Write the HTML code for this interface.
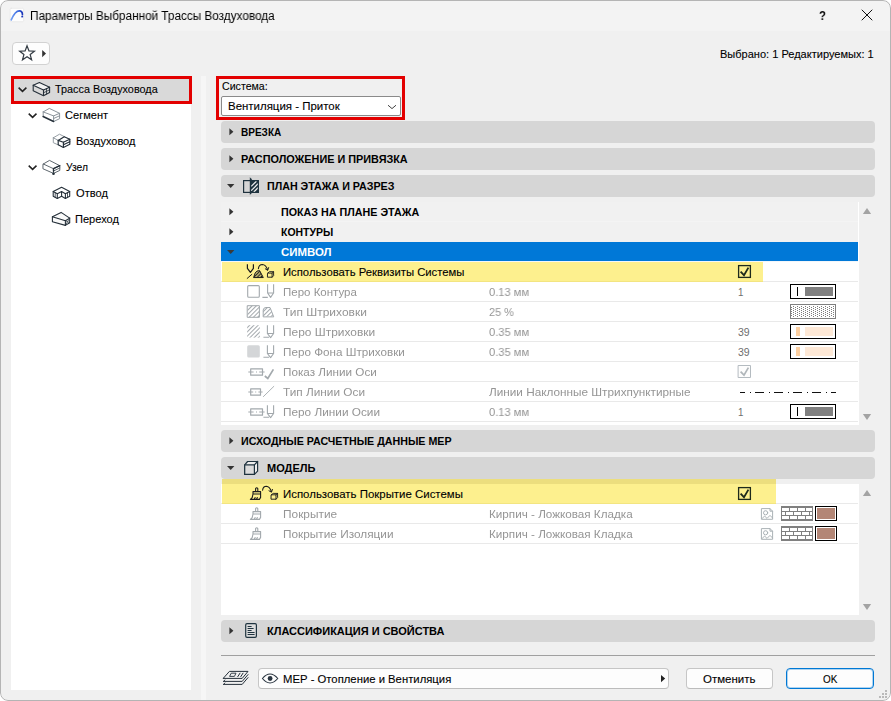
<!DOCTYPE html>
<html lang="ru">
<head>
<meta charset="utf-8">
<title>Параметры Выбранной Трассы Воздуховода</title>
<style>
html,body{margin:0;padding:0;}
body{width:891px;height:701px;overflow:hidden;background:#fff;font-family:"Liberation Sans",sans-serif;font-size:12px;position:relative;}
#win{position:absolute;left:0;top:0;width:891px;height:701px;border-radius:8px;background:#f0f0f0;overflow:hidden;}
#frame{position:absolute;left:0;top:0;width:889px;height:699px;border:1px solid #b4b4b4;border-radius:8px;pointer-events:none;}
#titlebar{position:absolute;left:0;top:0;width:891px;height:31px;background:#f3f3f3;}
.abs{position:absolute;}
.t{position:absolute;white-space:nowrap;line-height:14px;font-size:12px;transform-origin:0 0;display:block;}
.hdr{position:absolute;left:221px;width:654px;height:22px;background:#d6d6d6;border-radius:4px;}
.row{position:absolute;left:221px;width:637px;height:19px;border-bottom:1px solid #e9e9e9;background:#fff;}
.tri-r{position:absolute;width:0;height:0;border-style:solid;border-width:3.5px 0 3.5px 4px;border-color:transparent transparent transparent #333;}
.tri-d{position:absolute;width:0;height:0;border-style:solid;border-width:4px 3.5px 0 3.5px;border-color:#333 transparent transparent transparent;}
svg{position:absolute;overflow:visible;}
</style>
</head>
<body>
<div id="win">
<div id="titlebar"></div>

<!-- favourites button -->
<div class="abs" style="left:12px;top:42px;width:36px;height:21px;border:1px solid #d2d2d2;border-radius:4px;background:#fdfdfd;"></div>

<!-- tree panel -->
<div class="abs" style="left:11px;top:76px;width:180px;height:614px;background:#fff;"></div>
<div class="abs" style="left:11px;top:76px;width:175px;height:22px;border:3px solid #e30000;background:#d9d9d9;"></div>
<!-- splitter -->
<div class="abs" style="left:201px;top:76px;width:5px;height:625px;background:#f6f6f6;"></div>

<!-- system red box + dropdown -->
<div class="abs" style="left:216px;top:76px;width:183px;height:38px;border:3px solid #e30000;"></div>
<div class="abs" style="left:221px;top:96px;width:178px;height:18px;border:1px solid #8a8a8a;border-radius:2px;background:#fff;"></div>

<!-- header bars -->
<div class="hdr" style="top:121px;"></div>
<div class="hdr" style="top:148px;"></div>
<div class="hdr" style="top:175px;"></div>
<div class="hdr" style="top:430px;"></div>
<div class="hdr" style="top:457px;"></div>
<div class="hdr" style="top:620px;"></div>

<!-- list 1 -->
<div class="abs" style="left:221px;top:202px;width:637px;height:223px;background:#fff;"></div>
<div class="abs" style="left:858px;top:202px;width:1px;height:223px;background:#fff;"></div>
<div class="row" style="top:202px;background:#f1f1f1;border-bottom-color:#f4f4f4;"></div>
<div class="row" style="top:222px;background:#f1f1f1;border-bottom-color:#f1f1f1;"></div>
<div class="row" style="top:242px;background:#0078d7;border-bottom-color:#f3f7fb;"></div>
<div class="row" style="top:262px;"></div>
<div class="abs" style="left:222px;top:262px;width:541px;height:20px;background:#fdf08e;border-bottom:1px solid #f3e581;box-sizing:border-box;"></div>
<div class="row" style="top:282px;"></div>
<div class="row" style="top:302px;"></div>
<div class="row" style="top:322px;"></div>
<div class="row" style="top:342px;"></div>
<div class="row" style="top:362px;"></div>
<div class="row" style="top:382px;"></div>
<div class="row" style="top:402px;"></div>

<!-- list 2 -->
<div class="abs" style="left:221px;top:484px;width:638px;height:131px;background:#fff;"></div>
<div class="abs" style="left:222px;top:479px;width:554px;height:5px;background:#ecde7e;"></div>
<div class="row" style="top:484px;"></div>
<div class="abs" style="left:222px;top:484px;width:554px;height:20px;background:#fdf08e;border-bottom:1px solid #f3e581;box-sizing:border-box;"></div>
<div class="row" style="top:504px;"></div>
<div class="row" style="top:524px;"></div>

<!-- bottom separator -->
<div class="abs" style="left:221px;top:655px;width:654px;height:1px;background:#a0a0a0;"></div>
<!-- layer dropdown -->
<div class="abs" style="left:258px;top:668px;width:409px;height:19px;border:1px solid #c6c6c6;border-bottom-color:#bcbcbc;border-radius:4px;background:#fdfdfd;"></div>
<!-- buttons -->
<div class="abs" style="left:686px;top:668px;width:85px;height:19px;border:1px solid #c6c6c6;border-bottom-color:#bcbcbc;border-radius:4px;background:#fdfdfd;"></div>
<div class="abs" style="left:786px;top:668px;width:86px;height:19px;border:1px solid #0078d4;box-shadow:inset 0 0 0 1px rgba(0,120,212,.3);border-radius:4px;background:#fdfdfd;"></div>

<svg width="891" height="701" viewBox="0 0 891 701" style="left:0;top:0" fill="none" stroke-linecap="round" stroke-linejoin="round">
<defs>
<pattern id="dots" width="4" height="2" patternUnits="userSpaceOnUse"><rect width="4" height="2" fill="#fff"/><rect x="1" y="0" width="1" height="1" fill="#7c7c7c"/><rect x="3" y="1" width="1" height="1" fill="#7c7c7c"/></pattern>
<pattern id="hat" width="3" height="3" patternUnits="userSpaceOnUse" patternTransform="rotate(-45)"><rect width="3" height="1" y="1" fill="#a2a8ac"/></pattern>
<pattern id="hatd" width="2.4" height="2.4" patternUnits="userSpaceOnUse" patternTransform="rotate(-45)"><rect width="2.4" height="1.3" y="0.5" fill="#1c1c1c"/></pattern>
<linearGradient id="ac" x1="0" y1="0" x2="1" y2="0"><stop offset="0" stop-color="#6f9cf3"/><stop offset="0.6" stop-color="#3b6be0"/><stop offset="1" stop-color="#1b36b8"/></linearGradient>
</defs>

<!-- app icon -->
<rect x="10.2" y="8.3" width="13.4" height="13.4" rx="1" fill="#fdfdfd" stroke="#e2e2e2" stroke-width="0.6"/>
<path d="M11.2 19.8 C13.5 14.5 16 10.8 19.3 10.8 C21.6 10.8 22.4 12.6 22.4 14.6" stroke="url(#ac)" stroke-width="1.7"/>
<rect x="21.3" y="15.8" width="1.8" height="1.6" fill="#1b36b8"/>

<!-- title buttons -->
<path d="M862 10 L872 20 M872 10 L862 20" stroke="#111" stroke-width="1"/>
<!-- star -->
<path d="M27.05 45.85 L28.99 50.88 L34.37 51.17 L30.19 54.57 L31.58 59.78 L27.05 56.85 L22.52 59.78 L23.91 54.57 L19.73 51.17 L25.11 50.88 Z" stroke="#343c44" stroke-width="1.25" stroke-linejoin="miter"/>
<path d="M42.2 50 L46 53.6 L42.2 57.2 Z" fill="#333" stroke="none"/>

<!-- tree chevrons -->
<g stroke="#222" stroke-width="1.5" stroke-linecap="butt" stroke-linejoin="miter">
<path d="M18.6 87.6 L22.5 91.4 L26.4 87.6"/>
<path d="M28.7 113.6 L32.6 117.4 L36.5 113.6"/>
<path d="M28.7 165.6 L32.6 169.4 L36.5 165.6"/>
</g>

<!-- tree icon 1: duct run -->
<g stroke="#25303a" stroke-width="1.1">
<path d="M33.2 85.2 L39.4 82.6 L49.6 87.2 L43.5 90 Z" fill="#f2f2f2"/>
<path d="M33.2 85.1 L33.2 90.8 L43.5 95.7 L49.6 92.6 L49.6 87.1 M43.5 90 L43.5 95.7"/>
<path d="M43.5 92.8 L49.6 89.8 M46.5 88.6 L46.5 94.1" stroke-width="0.8"/>
</g>
<!-- tree icon 2: segment -->
<g stroke="#8b949b" stroke-width="1">
<path d="M43.2 111.9 L49.3 108.4 L59.6 113.3 L59.6 118.7 L53.6 121.5 M43.2 111.9 L43.2 116.3 M43.2 111.9 L53.6 115.9 L59.6 113.3 M53.6 115.9 L53.6 121.5 M53.6 118.5 L59.6 115.8"/>
</g>
<path d="M43.1 116.5 L53.6 121.5" stroke="#25303a" stroke-width="1.5"/>
<!-- tree icon 3: duct -->
<g stroke="#8b949b" stroke-width="0.9">
<path d="M53.3 137.8 L59.5 134.2 L64.2 136.6 M53.3 137.8 L53.3 142.7 L58.2 144.9 M53.3 137.8 L58.2 140.3"/>
</g>
<g stroke="#25303a" stroke-width="1.2">
<path d="M58.2 140.4 L64.2 136.7 L69.8 139.2 L69.8 144.3 L63.4 147.5 L58.2 144.7 Z"/>
<path d="M58.2 140.4 L63.4 142.2 L69.8 139.2 M63.4 142.2 L63.4 147.5 M63.4 144.8 L69.8 141.8" />
</g>
<!-- tree icon 4: node -->
<g stroke="#4c565e" stroke-width="0.9">
<path d="M43.3 164 L49.5 160.4 L59.8 165.7 L59.8 170.4 L53.5 173.4 L43.3 168.9 Z"/>
<path d="M43.3 164 L53.5 168.7 L59.8 165.7 M53.5 168.7 L53.5 173.4 M53.5 171 L59.8 168"/>
</g>
<path d="M53.5 171.2 L53.5 168.7 L59.8 165.7" stroke="#25303a" stroke-width="1.4"/>
<circle cx="53.5" cy="173.8" r="1.3" fill="#25303a"/>
<!-- tree icon 5: bend -->
<g stroke="#25303a" stroke-width="1.1">
<path d="M61.6 187.3 L69.7 191.6 L69.7 196.3 L65.4 198.4 L61.6 196.3 L57.3 198.4 L53.2 196.3 L53.2 191.6 Z"/>
<path d="M53.2 191.6 L57.3 193.7 L61.6 191.6 L65.4 193.7 L69.7 191.6 M57.3 193.7 L57.3 198.4 M65.4 193.7 L65.4 198.4 M61.6 191.6 L61.6 196.3"/>
<path d="M55.2 192.8 L55.2 197.2 M67.5 192.8 L67.5 197.2" stroke-width="0.8"/>
</g>
<!-- tree icon 6: transition -->
<g stroke="#25303a" stroke-width="1.1">
<path d="M61.1 212.4 L69.7 218.1 L69.7 222.8 L65.4 225.4 L52.4 221.8 L52.4 216.8 Z" fill="#fafafa"/>
<path d="M52.4 216.8 L65.4 220.7 L69.7 218.1 M65.4 220.7 L65.4 225.4"/>
<path d="M65.4 220.7 L69.7 222.8 M65.4 225.4 L69.7 218.1" stroke-width="0.7"/>
</g>

<!-- dropdown chevron -->
<path d="M388 105.2 L392 108.6 L396 105.2" stroke="#444" stroke-width="1" stroke-linecap="butt"/>

<!-- header triangles -->
<g fill="#333" stroke="none">
<path d="M229.4 128.2 L233.4 131.7 L229.4 135.2 Z"/>
<path d="M229.4 155.2 L233.4 158.7 L229.4 162.2 Z"/>
<path d="M227 184 L234.4 184 L230.7 188 Z"/>
<path d="M229.4 208.2 L233.4 211.7 L229.4 215.2 Z"/>
<path d="M229.4 228.2 L233.4 231.7 L229.4 235.2 Z"/>
<path d="M227 250 L234.4 250 L230.7 254 Z" fill="#3a3a3a"/>
<path d="M229.4 437.2 L233.4 440.7 L229.4 444.2 Z"/>
<path d="M227 466 L234.4 466 L230.7 470 Z"/>
<path d="M229.4 627.2 L233.4 630.7 L229.4 634.2 Z"/>
</g>

<!-- plan icon -->
<g stroke="#1f333f" stroke-width="1.2" stroke-linejoin="miter">
<rect x="250.4" y="180.4" width="8" height="12" fill="#1f333f" stroke="none"/>
<path d="M251.2 186.4 L256.4 181.2 M251.2 190.6 L258 183.8 M253.8 192 L258 187.8" stroke="#f0f0f0" stroke-width="1.25" stroke-linecap="butt"/>
<rect x="243.6" y="180.6" width="14.8" height="11.8"/>
<path d="M250.4 178.2 L250.4 194" stroke-linecap="butt"/>
<path d="M250.4 178 L251.6 179.6 M250.4 194.2 L251.6 192.6" stroke-width="0.9"/>
<path d="M250.6 185 L250.6 187.5 L251.8 188.5" stroke-width="0.9"/>
</g>
<!-- cube icon -->
<g stroke="#1f333f" stroke-width="1.2" stroke-linejoin="round">
<path d="M244.7 464.8 L247.6 461.5 L257.6 461.5 L257.6 471.2 L254.4 474.4 L244.7 474.4 Z" fill="#ececec"/>
<rect x="244.7" y="464.8" width="9.7" height="9.6" fill="#dcdcdc"/>
<path d="M254.4 464.8 L257.6 461.5"/>
</g>
<!-- classification icon -->
<g stroke="#1f333f">
<rect x="245.7" y="623.7" width="10.7" height="13.7" rx="1.3" stroke-width="1.2" fill="#dcdcdc"/>
<path d="M247.6 626.5 L251.6 626.5 M247.6 628.5 L253.6 628.5 M247.6 630.5 L251.6 630.5 M247.6 632.5 L254.6 632.5 M247.6 634.5 L254.6 634.5" stroke-width="1" stroke-linecap="butt"/>
</g>

<!-- row icon: use system attributes (dark) -->
<g stroke="#1c1c1c" stroke-width="1.1">
<path d="M247.4 264.3 L247.4 268.3 L250.4 272.3 L253.4 268.3 L253.4 264.3" stroke-linecap="butt" stroke-width="1.2"/>
<path d="M247.2 278.4 L251.8 274.4" stroke-width="1"/>
<path d="M253.7 277.2 L255.2 273 Q256.6 270.4 259.6 270.6 L263.1 277.2 Z" fill="url(#hatd)" stroke-width="1"/>
<path d="M258.4 268.6 Q258.8 264.6 262.4 264.5 Q265.8 264.6 267.6 269.8"/>
<path d="M265.3 268.8 L267.7 270.4 L268.6 267.6" stroke-width="1"/>
<path d="M267.8 273.1 L269.4 271.7 L273.6 271.7 L273.6 275.7 L272.1 277.2 L267.8 277.2 Z M267.8 273.1 L272.1 273.1 L272.1 277.2 M272.1 273.1 L273.6 271.7" stroke-width="0.95"/>
</g>

<!-- row icons gray -->
<g stroke="#a3a9ad" stroke-width="1.1">
<!-- pero kontura -->
<rect x="247.7" y="285.6" width="11.6" height="11.6" rx="1"/>
<path d="M262.4 297.4 L267.8 297.4 M267.6 284.3 L267.6 293 L270.6 297.4 L273.6 293 L273.6 284.3 M267.6 293 L273.6 293" stroke-linecap="butt"/>
<!-- tip shtrihovki -->
<rect x="247.6" y="305.7" width="11.8" height="11.6" fill="url(#hat)" stroke-width="1"/>
<path d="M263.2 316.5 L263.2 310 Q263.4 307.6 266 307.5 L270 307.5 L273.6 316.5 Z" fill="url(#hat)" stroke-width="1"/>
<!-- pero shtrihovki -->
<rect x="247.2" y="325.2" width="12.6" height="12.4" fill="url(#hat)" stroke="none"/>
<path d="M263.4 337.3 L269 337.3 M267.4 325.2 L267.4 333.5 L270.6 337.6 L273.6 333.5 L273.6 325.2 M267.4 333.5 L273.6 333.5" stroke-linecap="butt"/>
<!-- pero fona -->
<rect x="247.2" y="345.2" width="12.6" height="12.4" rx="1.5" fill="#d4d6d8" stroke="none"/>
<path d="M263.4 357.3 L269 357.3 M267.4 345.2 L267.4 353.5 L270.6 357.6 L273.6 353.5 L273.6 345.2 M267.4 353.5 L273.6 353.5" stroke-linecap="butt"/>
<!-- pokaz linii osi -->
<rect x="250.7" y="368.8" width="11.8" height="6.4" stroke-width="1.2"/>
<path d="M248.3 372 L253.6 372 M256 372 L257 372 M259.2 372 L264.6 372" stroke-width="1.2" stroke-linecap="butt"/>
<path d="M264.8 376 L267.8 378.4 L273.4 369.4" stroke-width="1.7" stroke-linecap="butt" stroke-linejoin="miter"/>
<!-- tip linii osi -->
<rect x="250.7" y="388.8" width="9.8" height="6.4" stroke-width="1.2"/>
<path d="M248.3 392 L253.2 392 M255.2 392 L256.2 392 M258.4 392 L262.6 392" stroke-width="1.2" stroke-linecap="butt"/>
<path d="M263.4 396.6 L273.8 386.4" stroke-width="0.9"/>
<!-- pero linii osi -->
<rect x="250.7" y="408.8" width="11.8" height="6.4" stroke-width="1.2"/>
<path d="M248.3 412 L253.6 412 M256 412 L257 412 M259.2 412 L264.6 412" stroke-width="1.2" stroke-linecap="butt"/>
<path d="M263.4 417.3 L269 417.3 M267.4 405.2 L267.4 413.5 L270.6 417.6 L273.6 413.5 L273.6 405.2 M267.4 413.5 L273.6 413.5" stroke-linecap="butt"/>
</g>

<!-- brush icons -->
<g stroke="#1c1c1c" stroke-width="1.1">
<path d="M255.6 491.4 L255.6 488.6 Q256.7 487 257.8 488.6 L257.8 491.4 M253 491.6 L260.6 491.6 L260.6 494 L253 494 Z M253 494 L252.2 497.6 L250.4 499.4 L259.4 499.4 L260.6 497.4 L260.6 494 M254.6 498.4 L255.2 497.6 M256.8 498.4 L257.4 497.6"/>
<path d="M262.6 490.2 Q263 486.2 266.4 486.2 Q269.6 486.4 271.4 491.6"/>
<path d="M269 490.8 L271.5 492.2 L272.4 489.4" stroke-width="1"/>
<path d="M271.4 494.8 L273.2 493.4 L277.6 493.4 L277.6 497.6 L276 499.2 L271.4 499.2 Z M271.4 494.8 L276 494.8 L276 499.2 M276 494.8 L277.6 493.4" stroke-width="0.95"/>
</g>
<g stroke="#a3a9ad" stroke-width="1.1">
<path d="M255.6 511.4 L255.6 508.6 Q256.7 507 257.8 508.6 L257.8 511.4 M253 511.6 L260.6 511.6 L260.6 514 L253 514 Z M253 514 L252.2 517.6 L250.4 519.4 L259.4 519.4 L260.6 517.4 L260.6 514 M254.6 518.4 L255.2 517.6 M256.8 518.4 L257.4 517.6"/>
<path d="M255.6 531.4 L255.6 528.6 Q256.7 527 257.8 528.6 L257.8 531.4 M253 531.6 L260.6 531.6 L260.6 534 L253 534 Z M253 534 L252.2 537.6 L250.4 539.4 L259.4 539.4 L260.6 537.4 L260.6 534 M254.6 538.4 L255.2 537.6 M256.8 538.4 L257.4 537.6"/>
</g>

<!-- checkboxes -->
<g stroke="#1e2a1c">
<rect x="738.6" y="265.6" width="11.8" height="11.8" stroke-width="1.3" stroke-linejoin="miter"/>
<path d="M740.6 271.6 L744 275.2 L748.4 267.6" stroke-width="1.8" stroke-linecap="butt" stroke-linejoin="miter"/>
<rect x="738.6" y="487.6" width="11.8" height="11.8" stroke-width="1.3" stroke-linejoin="miter"/>
<path d="M740.6 493.6 L744 497.2 L748.4 489.6" stroke-width="1.8" stroke-linecap="butt" stroke-linejoin="miter"/>
</g>
<rect x="738.5" y="365.5" width="12" height="12" stroke="#b4bbc0" stroke-width="1" fill="#fdfdfd"/>
<path d="M740.6 371.6 L744 375.2 L748.4 367.6" stroke="#b0b6ba" stroke-width="1.7" stroke-linecap="butt" stroke-linejoin="miter"/>

<!-- pen swatches -->
<g shape-rendering="crispEdges" stroke="none">
<rect x="790" y="284" width="46" height="15" fill="#000"/><rect x="791" y="285" width="44" height="13" fill="#fff"/>
<rect x="797" y="287" width="1" height="9" fill="#000"/><rect x="805" y="287" width="28" height="9" fill="#808080"/>
<rect x="790" y="304" width="46" height="15" fill="#7f7f7f"/><rect x="791" y="305" width="44" height="13" fill="#fff"/><rect x="791" y="306" width="44" height="11" fill="url(#dots)"/>
<rect x="790" y="324" width="46" height="15" fill="#000"/><rect x="791" y="325" width="44" height="13" fill="#fff"/>
<rect x="796" y="327" width="4" height="9" fill="#fdd0a2"/><rect x="805" y="327" width="28" height="9" fill="#fee9d7"/>
<rect x="790" y="344" width="46" height="15" fill="#000"/><rect x="791" y="345" width="44" height="13" fill="#fff"/>
<rect x="796" y="347" width="4" height="9" fill="#fdd0a2"/><rect x="805" y="347" width="28" height="9" fill="#fee9d7"/>
<rect x="790" y="404" width="46" height="15" fill="#000"/><rect x="791" y="405" width="44" height="13" fill="#fff"/>
<rect x="797" y="407" width="1" height="9" fill="#000"/><rect x="805" y="407" width="28" height="9" fill="#808080"/>
<!-- dash-dot line -->
<g fill="#111">
<rect x="740" y="392" width="5" height="1"/><rect x="750" y="392" width="1" height="1"/>
<rect x="755" y="392" width="9" height="1"/><rect x="769" y="392" width="1" height="1"/>
<rect x="774" y="392" width="9" height="1"/><rect x="788" y="392" width="1" height="1"/>
<rect x="793" y="392" width="9" height="1"/><rect x="807" y="392" width="1" height="1"/>
<rect x="812" y="392" width="9" height="1"/><rect x="826" y="392" width="1" height="1"/>
<rect x="831" y="392" width="5" height="1"/>
</g>
</g>

<!-- scroll arrows -->
<g fill="#a3a3a3" stroke="none">
<path d="M862.9 213.9 L871.1 213.9 L867 208 Z"/>
<path d="M862.9 414.1 L871.1 414.1 L867 420 Z"/>
<path d="M862.9 495.9 L871.1 495.9 L867 490 Z"/>
<path d="M862.9 604.1 L871.1 604.1 L867 610 Z"/>
</g>

<!-- image icons + brick + colour swatches -->
<g>
<path d="M761.8 508.6 L770 508.6 L772.6 511.2 L772.6 519.3 L761.8 519.3 Z M770 508.6 L770 511.2 L772.6 511.2" stroke="#aab2b6" stroke-width="1"/>
<circle cx="765.6" cy="512.8" r="2.1" stroke="#aab2b6" stroke-width="1"/>
<path d="M762 518.6 L764.6 516 L767 518.4 L770 515.4 L772.4 517.8" stroke="#aab2b6" stroke-width="1"/>
<g shape-rendering="crispEdges" stroke="none">
<rect x="781" y="506" width="32" height="15" fill="#808080"/>
<g fill="#fff">
<rect x="782" y="508" width="7" height="3"/><rect x="790" y="508" width="7" height="3"/><rect x="798" y="508" width="7" height="3"/><rect x="806" y="508" width="6" height="3"/>
<rect x="782" y="512" width="3" height="3"/><rect x="786" y="512" width="7" height="3"/><rect x="794" y="512" width="7" height="3"/><rect x="802" y="512" width="7" height="3"/><rect x="810" y="512" width="2" height="3"/>
<rect x="782" y="516" width="7" height="3"/><rect x="790" y="516" width="7" height="3"/><rect x="798" y="516" width="7" height="3"/><rect x="806" y="516" width="6" height="3"/>
</g>
<rect x="815" y="506" width="22" height="15" fill="#000"/><rect x="816" y="507" width="20" height="13" fill="#fff"/><rect x="817" y="508" width="18" height="11" fill="#b38676"/>
</g>
</g>
<g transform="translate(0,20)">
<path d="M761.8 508.6 L770 508.6 L772.6 511.2 L772.6 519.3 L761.8 519.3 Z M770 508.6 L770 511.2 L772.6 511.2" stroke="#aab2b6" stroke-width="1"/>
<circle cx="765.6" cy="512.8" r="2.1" stroke="#aab2b6" stroke-width="1"/>
<path d="M762 518.6 L764.6 516 L767 518.4 L770 515.4 L772.4 517.8" stroke="#aab2b6" stroke-width="1"/>
<g shape-rendering="crispEdges" stroke="none">
<rect x="781" y="506" width="32" height="15" fill="#808080"/>
<g fill="#fff">
<rect x="782" y="508" width="7" height="3"/><rect x="790" y="508" width="7" height="3"/><rect x="798" y="508" width="7" height="3"/><rect x="806" y="508" width="6" height="3"/>
<rect x="782" y="512" width="3" height="3"/><rect x="786" y="512" width="7" height="3"/><rect x="794" y="512" width="7" height="3"/><rect x="802" y="512" width="7" height="3"/><rect x="810" y="512" width="2" height="3"/>
<rect x="782" y="516" width="7" height="3"/><rect x="790" y="516" width="7" height="3"/><rect x="798" y="516" width="7" height="3"/><rect x="806" y="516" width="6" height="3"/>
</g>
<rect x="815" y="506" width="22" height="15" fill="#000"/><rect x="816" y="507" width="20" height="13" fill="#fff"/><rect x="817" y="508" width="18" height="11" fill="#b38676"/>
</g>
</g>


<!-- layer icon -->
<g stroke="#25303a" stroke-width="1" stroke-linejoin="miter">
<path d="M229.8 671.4 L248 671.4 L242.2 678.4 L223.6 678.4 Z"/>
<path d="M223.6 681.4 L242.2 681.4 L248 674.6 M223.6 684.4 L242.2 684.4 L248 677.6 M223.6 678.4 L223.6 678.4"/>
<path d="M224.8 680 L223.6 681.4 M224.8 683 L223.6 684.4" />
<path d="M231.6 673.2 L236 673.2 L234.4 676.4 L230 676.4 Z" stroke-width="0.9"/>
<path d="M240 673.2 L237.8 676.6 M243 673.2 L240.8 676.6" stroke-width="1"/>
</g>
<!-- eye -->
<path d="M262.4 678.5 Q270 669.6 277.8 678.5 Q270 687.4 262.4 678.5 Z" stroke="#2a3540" stroke-width="1.1"/>
<circle cx="270.1" cy="678.5" r="2.4" fill="#2a3540"/>
<!-- layer dropdown arrow -->
<path d="M661 674.9 L665.2 678.55 L661 682.2 Z" fill="#222"/>

<!-- resize grip -->
<g fill="#b9b9b9" shape-rendering="crispEdges">
<rect x="885" y="690" width="2" height="2"/>
<rect x="882" y="693" width="2" height="2"/><rect x="885" y="693" width="2" height="2"/>
<rect x="879" y="696" width="2" height="2"/><rect x="882" y="696" width="2" height="2"/><rect x="885" y="696" width="2" height="2"/>
</g>
</svg>


<span class="t" style="left:30.00px;top:9.00px;font-size:12px;font-weight:400;color:#000;will-change:transform;transform:scaleX(0.9799)">Параметры Выбранной Трассы Воздуховода</span>
<span class="t" style="left:720.00px;top:47.00px;font-size:11.5px;font-weight:400;color:#000;-webkit-text-stroke:0.1px #000;transform:scaleX(0.9589)">Выбрано: 1 Редактируемых: 1</span>
<span class="t" style="left:55.00px;top:82.00px;font-size:11.5px;font-weight:400;color:#000;-webkit-text-stroke:0.1px #000;transform:scaleX(0.9426)">Трасса Воздуховода</span>
<span class="t" style="left:65.00px;top:108.00px;font-size:11.5px;font-weight:400;color:#000;-webkit-text-stroke:0.1px #000;transform:scaleX(0.9609)">Сегмент</span>
<span class="t" style="left:76.00px;top:134.00px;font-size:11.5px;font-weight:400;color:#000;-webkit-text-stroke:0.1px #000;transform:scaleX(0.9531)">Воздуховод</span>
<span class="t" style="left:66.00px;top:160.00px;font-size:11.5px;font-weight:400;color:#000;-webkit-text-stroke:0.1px #000;transform:scaleX(0.8931)">Узел</span>
<span class="t" style="left:76.00px;top:186.00px;font-size:11.5px;font-weight:400;color:#000;-webkit-text-stroke:0.1px #000;transform:scaleX(0.9667)">Отвод</span>
<span class="t" style="left:75.00px;top:212.00px;font-size:11.5px;font-weight:400;color:#000;-webkit-text-stroke:0.1px #000;transform:scaleX(0.9626)">Переход</span>
<span class="t" style="left:222.00px;top:79.00px;font-size:11.5px;font-weight:400;color:#000;-webkit-text-stroke:0.1px #000;transform:scaleX(0.9233)">Система:</span>
<span class="t" style="left:228.00px;top:99.00px;font-size:11.5px;font-weight:400;color:#000;-webkit-text-stroke:0.1px #000;transform:scaleX(0.9959)">Вентиляция - Приток</span>
<span class="t" style="left:241.00px;top:125.00px;font-size:11.5px;font-weight:700;color:#000;transform:scaleX(0.8715)">ВРЕЗКА</span>
<span class="t" style="left:241.00px;top:152.00px;font-size:11.5px;font-weight:700;color:#000;transform:scaleX(0.9430)">РАСПОЛОЖЕНИЕ И ПРИВЯЗКА</span>
<span class="t" style="left:267.00px;top:179.00px;font-size:11.5px;font-weight:700;color:#000;transform:scaleX(0.9304)">ПЛАН ЭТАЖА И РАЗРЕЗ</span>
<span class="t" style="left:281.00px;top:205.00px;font-size:11.5px;font-weight:700;color:#000;transform:scaleX(0.9334)">ПОКАЗ НА ПЛАНЕ ЭТАЖА</span>
<span class="t" style="left:281.00px;top:225.00px;font-size:11.5px;font-weight:700;color:#000;transform:scaleX(0.9084)">КОНТУРЫ</span>
<span class="t" style="left:281.00px;top:245.00px;font-size:11.5px;font-weight:700;color:#fff;transform:scaleX(0.9934)">СИМВОЛ</span>
<span class="t" style="left:241.00px;top:434.00px;font-size:11.5px;font-weight:700;color:#000;transform:scaleX(0.9275)">ИСХОДНЫЕ РАСЧЕТНЫЕ ДАННЫЕ МЕР</span>
<span class="t" style="left:267.00px;top:461.00px;font-size:11.5px;font-weight:700;color:#000;transform:scaleX(0.9566)">МОДЕЛЬ</span>
<span class="t" style="left:267.00px;top:624.00px;font-size:11.5px;font-weight:700;color:#000;transform:scaleX(0.9560)">КЛАССИФИКАЦИЯ И СВОЙСТВА</span>
<span class="t" style="left:283.00px;top:265.00px;font-size:11.5px;font-weight:400;color:#000;-webkit-text-stroke:0.1px #000;transform:scaleX(0.9811)">Использовать Реквизиты Системы</span>
<span class="t" style="left:283.00px;top:285.00px;font-size:11.5px;font-weight:400;color:#959595;will-change:transform;transform:scaleX(0.9953)">Перо Контура</span>
<span class="t" style="left:283.00px;top:305.00px;font-size:11.5px;font-weight:400;color:#959595;will-change:transform;transform:scaleX(1.0403)">Тип Штриховки</span>
<span class="t" style="left:283.00px;top:325.00px;font-size:11.5px;font-weight:400;color:#959595;will-change:transform;transform:scaleX(1.0374)">Перо Штриховки</span>
<span class="t" style="left:283.00px;top:345.00px;font-size:11.5px;font-weight:400;color:#959595;will-change:transform;transform:scaleX(1.0160)">Перо Фона Штриховки</span>
<span class="t" style="left:283.00px;top:365.00px;font-size:11.5px;font-weight:400;color:#959595;will-change:transform;transform:scaleX(1.0181)">Показ Линии Оси</span>
<span class="t" style="left:283.00px;top:385.00px;font-size:11.5px;font-weight:400;color:#959595;will-change:transform;transform:scaleX(1.0266)">Тип Линии Оси</span>
<span class="t" style="left:283.00px;top:405.00px;font-size:11.5px;font-weight:400;color:#959595;will-change:transform;transform:scaleX(1.0265)">Перо Линии Осии</span>
<span class="t" style="left:489.00px;top:285.00px;font-size:11.5px;font-weight:400;color:#959595;will-change:transform;transform:scaleX(0.9682)">0.13 мм</span>
<span class="t" style="left:489.00px;top:305.00px;font-size:11.5px;font-weight:400;color:#959595;will-change:transform;transform:scaleX(0.9442)">25 %</span>
<span class="t" style="left:489.00px;top:325.00px;font-size:11.5px;font-weight:400;color:#959595;will-change:transform;transform:scaleX(0.9694)">0.35 мм</span>
<span class="t" style="left:489.00px;top:345.00px;font-size:11.5px;font-weight:400;color:#959595;will-change:transform;transform:scaleX(0.9694)">0.35 мм</span>
<span class="t" style="left:489.00px;top:385.00px;font-size:11.5px;font-weight:400;color:#959595;will-change:transform;transform:scaleX(1.0232)">Линии Наклонные Штрихпунктирные</span>
<span class="t" style="left:489.00px;top:405.00px;font-size:11.5px;font-weight:400;color:#959595;will-change:transform;transform:scaleX(0.9682)">0.13 мм</span>
<span class="t" style="left:738.00px;top:285.00px;font-size:11.5px;font-weight:400;color:#6d6d6d;transform:scaleX(0.8500)">1</span>
<span class="t" style="left:738.00px;top:325.00px;font-size:11.5px;font-weight:400;color:#6d6d6d;transform:scaleX(0.9122)">39</span>
<span class="t" style="left:738.00px;top:345.00px;font-size:11.5px;font-weight:400;color:#6d6d6d;transform:scaleX(0.9122)">39</span>
<span class="t" style="left:738.00px;top:405.00px;font-size:11.5px;font-weight:400;color:#6d6d6d;transform:scaleX(0.8500)">1</span>
<span class="t" style="left:283.00px;top:487.00px;font-size:11.5px;font-weight:400;color:#000;-webkit-text-stroke:0.1px #000;transform:scaleX(0.9938)">Использовать Покрытие Системы</span>
<span class="t" style="left:283.00px;top:507.00px;font-size:11.5px;font-weight:400;color:#959595;will-change:transform;transform:scaleX(1.0318)">Покрытие</span>
<span class="t" style="left:283.00px;top:527.00px;font-size:11.5px;font-weight:400;color:#959595;will-change:transform;transform:scaleX(1.0277)">Покрытие Изоляции</span>
<span class="t" style="left:489.00px;top:507.00px;font-size:11.5px;font-weight:400;color:#959595;will-change:transform;transform:scaleX(1.0155)">Кирпич - Ложковая Кладка</span>
<span class="t" style="left:489.00px;top:527.00px;font-size:11.5px;font-weight:400;color:#959595;will-change:transform;transform:scaleX(1.0155)">Кирпич - Ложковая Кладка</span>
<span class="t" style="left:283.00px;top:672.00px;font-size:11.5px;font-weight:400;color:#000;-webkit-text-stroke:0.1px #000;transform:scaleX(0.9827)">МЕР - Отопление и Вентиляция</span>
<span class="t" style="left:703.00px;top:672.00px;font-size:11.5px;font-weight:400;color:#000;-webkit-text-stroke:0.1px #000;transform:scaleX(0.9977)">Отменить</span>
<span class="t" style="left:823.00px;top:672.00px;font-size:11.5px;font-weight:400;color:#000;-webkit-text-stroke:0.1px #000;transform:scaleX(0.8663)">OK</span>
<span class="t" style="left:819.00px;top:9.00px;font-size:13px;font-weight:700;color:#000;will-change:transform;transform:scaleX(0.8769)">?</span>
<div id="frame"></div>
</div>
</body>
</html>
